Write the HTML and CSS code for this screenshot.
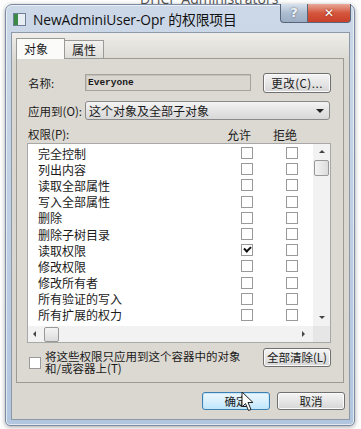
FILE: index.html
```html
<!DOCTYPE html>
<html lang="zh-CN">
<head>
    <meta charset="UTF-8">
    <title>NewAdminiUser-Opr 的权限项目</title>
    <link rel="stylesheet" href="styles.css">
</head>
<body>
    <div class="backdrop">
        <span class="ghost ghost-top">DHCP Administrators</span>
    </div>

    <div class="window">
        <div class="titlebar">
            <span class="app-icon"></span>
            <span class="title">NewAdminiUser-Opr 的权限项目</span>
            <div class="caption-buttons">
                <span class="cap-btn help">?</span>
                <span class="cap-btn close">&#x2715;</span>
            </div>
        </div>

        <div class="client">
            <div class="tabs">
                <span class="tab active">对象</span>
                <span class="tab">属性</span>
            </div>

            <div class="panel">
                <div class="field-row">
                    <span class="label">名称:</span>
                    <span class="textbox">Everyone</span>
                    <span class="btn change">更改(C)...</span>
                </div>

                <div class="field-row apply-row">
                    <span class="label">应用到(O):</span>
                    <span class="combo">这个对象及全部子对象<span class="combo-arrow"></span></span>
                </div>

                <div class="perm-head">
                    <span class="perm-title">权限(P):</span>
                    <span class="col-head">允许</span>
                    <span class="col-head">拒绝</span>
                </div>

                <div class="listbox">
                    <div class="list-body">
                        <div class="rows" id="rows"></div>
                        <div class="vscroll">
                            <span class="arrow up"></span>
                            <span class="vthumb"></span>
                            <span class="vtrack"></span>
                            <span class="arrow down"></span>
                        </div>
                    </div>
                    <div class="hscroll">
                        <span class="arrow left"></span>
                        <span class="hthumb"></span>
                        <span class="htrack"></span>
                        <span class="arrow right"></span>
                        <span class="corner"></span>
                    </div>
                </div>

                <div class="bottom-row">
                    <span class="check big"></span>
                    <span class="inherit-text">将这些权限只应用到这个容器中的对象<br>和/或容器上(T)</span>
                    <span class="btn clear">全部清除(L)</span>
                </div>
            </div>

            <div class="actions">
                <span class="btn action ok">确定</span>
                <span class="btn action">取消</span>
            </div>
        </div>

        <svg class="cursor" width="14" height="21" viewBox="0 0 14 21">
            <path d="M1 1 L1 16 L4.5 12.5 L7.5 19.5 L10 18.5 L7 11.5 L12 11.5 Z" fill="#fff" stroke="#222" stroke-width="1"/>
        </svg>
    </div>

    <script>
        var perms = [
            ['完全控制', false], ['列出内容', false], ['读取全部属性', false],
            ['写入全部属性', false], ['删除', false], ['删除子树目录', false],
            ['读取权限', true], ['修改权限', false], ['修改所有者', false],
            ['所有验证的写入', false], ['所有扩展的权力', false]
        ];
        var rows = document.getElementById('rows');
        perms.forEach(function (p) {
            var row = document.createElement('div');
            row.className = 'row';
            row.innerHTML = '<span class="perm-name">' + p[0] + '</span>' +
                '<span class="check' + (p[1] ? ' checked' : '') + '"></span>' +
                '<span class="check"></span>';
            rows.appendChild(row);
        });
    </script>
</body>
</html>
```

FILE: styles.css
```css
body {
    margin: 0;
    width: 361px;
    height: 429px;
    overflow: hidden;
    background: #fdfdfd;
    font-family: "Noto Sans CJK SC", "Noto Sans", sans-serif;
    font-size: 11.5px;
    color: #1a1a1a;
    position: relative;
}
.backdrop {
    position: absolute;
    inset: 0;
}
.ghost {
    position: absolute;
    font-family: "Open Sans", sans-serif;
    font-size: 14px;
    color: #555;
}
.ghost-top {
    left: 140px;
    top: -11px;
}
.window {
    position: absolute;
    left: 5px;
    top: 4px;
    width: 348px;
    height: 420px;
    border: 1px solid #7a8ba3;
    border-radius: 7px 7px 5px 5px;
    background: linear-gradient(to bottom, rgba(200, 213, 230, 0.92), rgba(176, 196, 222, 0.97));
    box-shadow: 0 1px 4px rgba(0, 0, 0, 0.35), inset 0 0 0 1px rgba(255, 255, 255, 0.6);
    display: flex;
    flex-direction: column;
}
.titlebar {
    height: 27px;
    display: flex;
    align-items: flex-start;
    flex: none;
}
.app-icon {
    width: 11px;
    height: 11px;
    margin: 8px 7px 0 7px;
    background: linear-gradient(to right, #3d8a46 0 4px, #e8eef4 4px);
    border: 1px solid #6d8095;
}
.title {
    margin-top: 4px;
    font-family: "Open Sans", "Noto Sans CJK SC", sans-serif;
    font-size: 13.8px;
    color: #111;
    letter-spacing: -0.1px;
}
.caption-buttons {
    margin-left: auto;
    margin-right: 3px;
    display: flex;
    margin-top: -1px;
}
.cap-btn {
    height: 18px;
    border: 1px solid #59657a;
    border-top: none;
    color: #fff;
    font-weight: bold;
    text-align: center;
    line-height: 18px;
}
.help {
    width: 26px;
    border-radius: 0 0 0 4px;
    background: linear-gradient(to bottom, #d8e2ee, #aebdd0 50%, #9cadc3);
    color: #eef2f7;
    font-family: "DejaVu Sans", sans-serif;
    font-size: 13px;
    text-shadow: 0 0 2px #4d5b6f;
}
.close {
    width: 42px;
    border-left: none;
    border-radius: 0 0 4px 0;
    background: linear-gradient(to bottom, #e8a99a, #d4563c 50%, #c9402a);
    font-family: "DejaVu Sans", sans-serif;
    font-size: 12px;
    text-shadow: 0 0 2px #6d1d10;
}
.client {
    margin: 0 4px 5px 5px;
    flex: 1;
    border: 1px solid #8d99a9;
    background: linear-gradient(to bottom, #eeede9, #dad7d0 30px);
    padding: 4px 5px 0 4px;
    display: flex;
    flex-direction: column;
}
.client > * {
    flex: none;
}
.tabs {
    display: flex;
    align-items: flex-end;
    height: 21px;
    padding-left: 1px;
}
.tab {
    height: 17px;
    padding: 0 7px;
    border: 1px solid #9a9a96;
    border-bottom: none;
    background: linear-gradient(to bottom, #f2f2f0, #e0deda);
    line-height: 18px;
    font-size: 12px;
    margin-left: -1px;
}
.tab.active {
    height: 20px;
    width: 33px;
    background: #fbfbfa;
    position: relative;
    z-index: 1;
    margin-bottom: -1px;
    line-height: 20px;
}
.panel {
    border: 1px solid #9a9a96;
    background: #dcd9d2;
    height: 323px;
    padding: 0 14px 0 10px;
    display: flex;
    flex-direction: column;
}
.panel > * {
    flex: none;
}
.field-row {
    display: flex;
    align-items: center;
    margin-top: 14px;
    height: 19px;
    padding-left: 1px;
}
.label {
    width: 57px;
    flex: none;
}
.textbox {
    width: 162px;
    height: 15px;
    border: 1px solid #a6a39c;
    background: #dad7d1;
    font-family: "Liberation Mono", monospace;
    font-weight: bold;
    font-size: 9.5px;
    line-height: 15px;
    padding-left: 2px;
    box-shadow: inset 1px 1px 0 #c4c1ba;
}
.btn {
    border: 1px solid #707070;
    border-radius: 3px;
    background: linear-gradient(to bottom, #f4f4f4, #e6e6e6 50%, #d6d6d6);
    box-shadow: inset 0 0 0 1px #fbfbfb;
    text-align: center;
    white-space: nowrap;
}
.change {
    margin-left: auto;
    width: 66px;
    height: 18px;
    line-height: 18px;
    letter-spacing: 0.5px;
    margin-right: -2px;
}
.apply-row {
    margin-top: 9px;
}
.apply-row .label {
    width: 57px;
}
.combo {
    flex: 1;
    height: 17px;
    border: 1px solid #8a8a8a;
    border-radius: 3px;
    background: linear-gradient(to bottom, #f4f4f4, #e4e4e4 50%, #d8d8d8);
    padding-left: 3px;
    line-height: 17px;
    font-size: 12px;
    display: flex;
    align-items: center;
    margin-right: -1px;
}
.combo-arrow {
    margin-left: auto;
    margin-right: 5px;
    border: 4px solid transparent;
    border-top: 4px solid #222;
    border-bottom: none;
}
.perm-head {
    display: flex;
    margin-top: 5px;
    height: 18px;
    align-items: center;
    padding-left: 1px;
    padding-right: 10px;
}
.perm-title {
    flex: 1;
}
.col-head {
    width: 46px;
    font-size: 12px;
}
.listbox {
    margin-top: 0;
    width: 302px;
    border: 1px solid #a8a8a8;
    background: #fff;
}
.list-body {
    display: flex;
    height: 182px;
}
.rows {
    width: 285px;
    padding-top: 1px;
}
.row {
    display: flex;
    align-items: center;
    height: 16.2px;
}
.perm-name {
    flex: none;
    box-sizing: border-box;
    width: 213px;
    padding-left: 10px;
    font-size: 12px;
}
.check {
    flex: none;
    width: 10px;
    height: 10px;
    border: 1px solid #9a9a9a;
    background: #fff;
    margin-right: 33px;
    position: relative;
}
.row .check:last-child {
    margin-right: 0;
}
.check.checked::after {
    content: "";
    position: absolute;
    left: 2px;
    top: 1px;
    width: 5px;
    height: 3px;
    border-left: 2px solid #111;
    border-bottom: 2px solid #111;
    transform: rotate(-45deg);
}
.vscroll {
    width: 17px;
    display: flex;
    flex-direction: column;
    align-items: center;
    background: #f2f2f2;
}
.arrow {
    width: 16px;
    height: 16px;
    position: relative;
    flex: none;
}
.arrow::after {
    content: "";
    position: absolute;
    left: 5px;
    top: 6px;
    border: 3px solid transparent;
}
.up::after { border-bottom: 3px solid #444; border-top: none; }
.down::after { border-top: 3px solid #444; border-bottom: none; }
.left::after { border-right: 3px solid #444; border-left: none; top: 5px; }
.right::after { border-left: 3px solid #444; border-right: none; top: 5px; }
.vthumb {
    width: 13px;
    height: 14px;
    border: 1px solid #989898;
    border-radius: 2px;
    background: linear-gradient(to right, #f4f4f4, #dcdcdc);
}
.vtrack {
    flex: 1;
}
.hscroll {
    display: flex;
    height: 16px;
    align-items: center;
    background: #f2f2f2;
}
.hthumb {
    width: 13px;
    height: 13px;
    border: 1px solid #989898;
    border-radius: 2px;
    background: linear-gradient(to bottom, #f4f4f4, #dcdcdc);
}
.htrack {
    flex: 1;
}
.corner {
    width: 17px;
    height: 16px;
    background: #e6e6e6;
}
.bottom-row {
    display: flex;
    align-items: flex-start;
    margin-top: 5px;
}
.check.big {
    margin: 9px 4px 0 2px;
    width: 10px;
    height: 10px;
}
.inherit-text {
    flex: 1;
    line-height: 11.5px;
    font-size: 11.5px;
    margin-top: 3px;
}
.clear {
    width: 66px;
    height: 17px;
    line-height: 17px;
    margin-right: -2px;
}
.actions {
    display: flex;
    justify-content: flex-end;
    gap: 7px;
    margin-top: 9px;
    margin-right: -1px;
}
.action {
    width: 66px;
    height: 16px;
    line-height: 16px;
}
.ok {
    border-color: #3c7fb1;
    background: linear-gradient(to bottom, #eaf6fd, #d9f0fc 50%, #bee6fd);
    box-shadow: inset 0 0 0 1px #c6e7f9;
}
.cursor {
    position: absolute;
    left: 235px;
    top: 386px;
}
```
